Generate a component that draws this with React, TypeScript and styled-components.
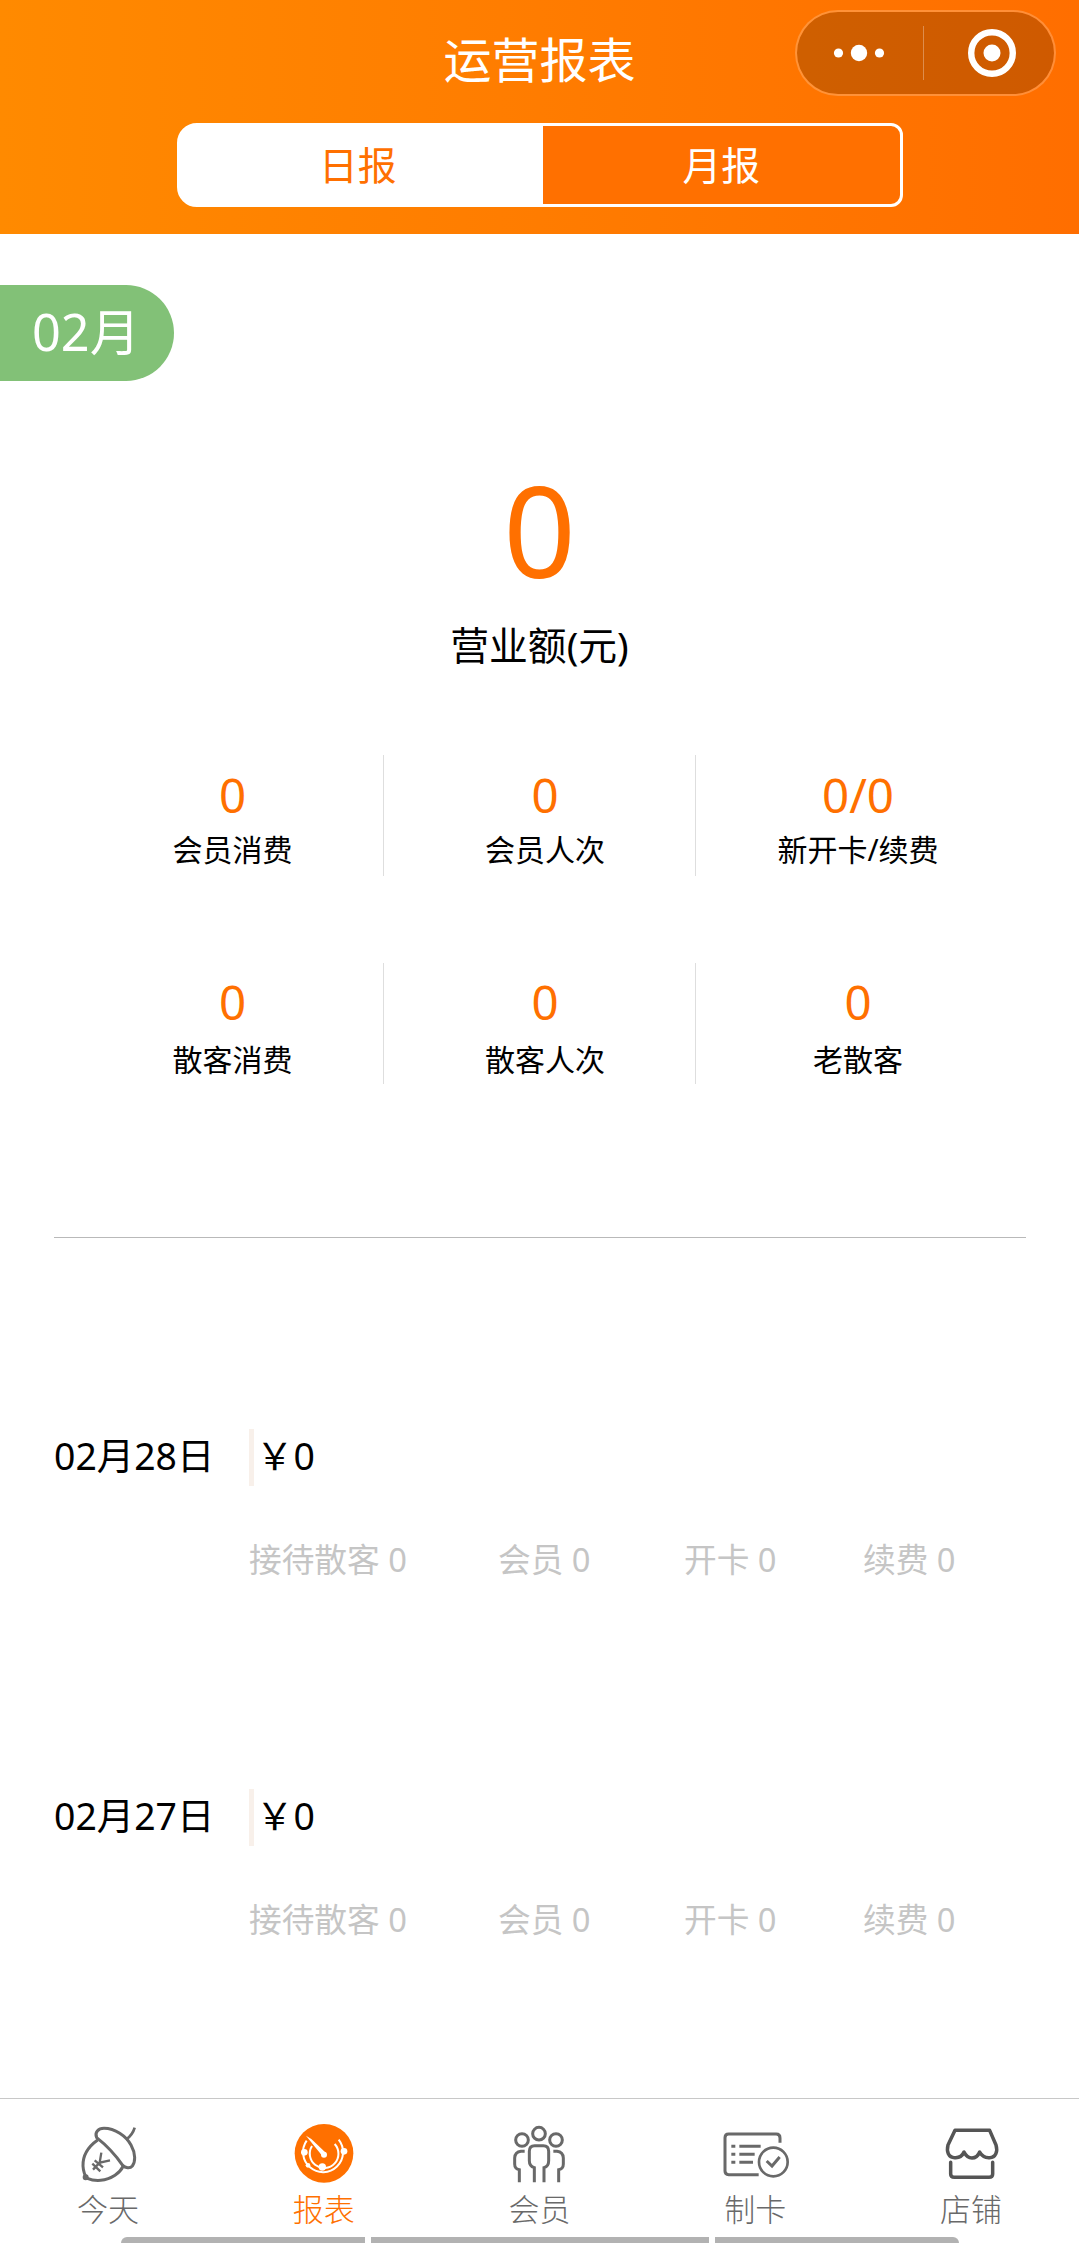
import React from "react";
import styled, { createGlobalStyle } from "styled-components";

const ORANGE = "#ff7000";
const GREY = "#696969";

const GlobalStyle = createGlobalStyle`
  * { box-sizing: border-box; }
  body {
    margin: 0;
    background: #fff;
    color: #000;
    font-family: "Noto Sans", "Noto Sans CJK SC", sans-serif;
  }
`;

const Page = styled.div`
  width: 1079px;
  height: 2243px;
  display: flex;
  flex-direction: column;
  overflow: hidden;
`;

const Header = styled.header`
  position: relative;
  height: 234px;
  flex: none;
  display: flex;
  flex-direction: column;
  align-items: center;
  background: linear-gradient(90deg, #ff8a00 0%, #ff6e00 100%);
`;

const Title = styled.h1`
  margin: 24px 0 0;
  height: 72px;
  line-height: 72px;
  font-size: 48px;
  font-weight: 400;
  color: #fff;
`;

const Capsule = styled.div`
  position: absolute;
  top: 10px;
  left: 795px;
  width: 261px;
  height: 86px;
  border: 2px solid rgba(255, 255, 255, 0.22);
  border-radius: 43px;
  background: rgba(0, 0, 0, 0.19);
  background-clip: padding-box;
  display: flex;
  align-items: center;
`;

const CapsuleHalf = styled.div<{ $pad: string }>`
  flex: 1;
  padding: ${(p) => p.$pad};
  display: flex;
  align-items: center;
  justify-content: center;
`;

const CapsuleRule = styled.div`
  width: 1px;
  height: 54px;
  background: rgba(255, 255, 255, 0.3);
`;

const Segment = styled.div`
  margin-top: 27px;
  width: 726px;
  height: 84px;
  display: flex;
`;

const SegmentItem = styled.button<{ $active?: boolean }>`
  flex: 1;
  padding: 0;
  border: 3px solid #fff;
  border-radius: ${(p) => (p.$active ? "20px 0 0 20px" : "0 12px 12px 0")};
  border-left-width: ${(p) => (p.$active ? "3px" : "4px")};
  background: ${(p) => (p.$active ? "#fff" : ORANGE)};
  color: ${(p) => (p.$active ? ORANGE : "#fff")};
  font-family: inherit;
  font-size: 38.8px;
  line-height: 56px;
`;

const Month = styled.div`
  margin-top: 51px;
  width: 174px;
  height: 96px;
  flex: none;
  padding-left: 32px;
  border-radius: 0 48px 48px 0;
  background: #82c177;
  color: #fff;
  font-size: 50.4px;
  line-height: 94px;
`;

const Summary = styled.section`
  height: 374px;
  flex: none;
  display: flex;
  flex-direction: column;
  align-items: center;
`;

const SummaryValue = styled.div`
  margin-top: 53px;
  height: 190px;
  line-height: 190px;
  font-size: 127px;
  color: ${ORANGE};
`;

const SummaryLabel = styled.div`
  margin-top: -7px;
  height: 56px;
  line-height: 56px;
  font-size: 38.8px;
`;

const Stats = styled.section`
  width: 939px;
  margin-left: 71px;
  flex: none;
  display: grid;
  grid-template-columns: 313px 312px 314px;
  row-gap: 87px;
`;

const Stat = styled.div<{ $top: number; $gap: number }>`
  height: 121px;
  display: flex;
  flex-direction: column;
  align-items: center;
  gap: ${(p) => p.$gap}px;
  padding: ${(p) => p.$top}px 0 0 11px;
  border-right: 1px solid #dedede;
  &:nth-child(3n) { border-right-color: transparent; }
`;

const StatValue = styled.div`
  height: 62px;
  line-height: 62px;
  font-size: 47.5px;
  color: ${ORANGE};
`;

const StatLabel = styled.div`
  height: 44px;
  line-height: 44px;
  font-size: 30px;
`;

const Rule = styled.hr`
  width: 972px;
  height: 1px;
  flex: none;
  margin: 153px 0 0 54px;
  border: 0;
  background: #b9b9b9;
`;

const Days = styled.section`
  flex: 1;
  min-height: 0;
  padding: 191px 0 0 54px;
  display: flex;
  flex-direction: column;
  gap: 205px;
`;

const Day = styled.article`
  height: 155px;
  flex: none;
`;

const DayHead = styled.div`
  height: 57px;
  display: flex;
  align-items: center;
  font-size: 37.4px;
`;

const DayDate = styled.div`
  width: 195px;
  line-height: 54px;
  padding-bottom: 4px;
`;

const DayAmount = styled.div`
  height: 57px;
  border-left: 5px solid #f8f0ea;
  padding-left: 2px;
  line-height: 53px;
`;

const DayDetail = styled.div`
  margin: 50px 0 0 195px;
  display: grid;
  grid-template-columns: 249px 186px 179px 150px;
  line-height: 48px;
  font-size: 32.7px;
  color: #c5c5c5;
`;

const TabBar = styled.nav`
  height: 139px;
  flex: none;
  border-top: 1px solid #c8c8c8;
  background: #fff;
  display: grid;
  grid-template-columns: repeat(5, 1fr);
`;

const Tab = styled.div<{ $active?: boolean }>`
  display: flex;
  flex-direction: column;
  align-items: center;
  color: ${(p) => (p.$active ? ORANGE : GREY)};
`;

const TabIcon = styled.svg`
  margin-top: 21px;
  width: 68px;
  height: 64px;
  flex: none;
  fill: none;
  stroke: currentColor;
  stroke-width: 9;
`;

const TabLabel = styled.div`
  height: 48px;
  line-height: 48px;
  font-family: "Noto Sans CJK SC", sans-serif;
  font-size: 31px;
  font-weight: 300;
`;

const HomeStrip = styled.div`
  height: 6px;
  flex: none;
  padding: 0 120px 0 121px;
  display: grid;
  grid-template-columns: 244px 338px 244px;
  column-gap: 6px;
`;

const HomePart = styled.div`
  background: #b2b2b2;
  &:first-child { border-top-left-radius: 6px; }
  &:last-child { border-top-right-radius: 6px; }
`;

const AcornIcon = () => (
  <TabIcon viewBox="222 90 204 192">
    <path d="M290 143C283 127 295 115 312 115C345 115 378 138 393 165C408 192 406 216 397 228C390 236 376 234 368 226C350 200 322 168 290 143Z" />
    <path d="M378 149C392 139 400 128 404 113" strokeWidth="8" />
    <path d="M293 150C262 172 248 200 249 228C250 246 254 256 262 265C285 275 318 274 345 256C358 247 365 238 370 228" />
    <circle cx="257" cy="262" r="7" fill="currentColor" strokeWidth="4" />
    <path d="M304 188L299 218L330 211M299 218L279 239M277 221L301 244M284 211L309 232" strokeWidth="7" />
  </TabIcon>
);

const ReportIcon = () => (
  <TabIcon viewBox="869 90 204 192">
    <circle cx="971" cy="190" r="88" fill="currentColor" stroke="none" />
    <g stroke="#fff" strokeWidth="6">
      <path d="M919 152A60 60 0 1 0 1015 149" />
      <path d="M935 168A43 43 0 1 0 1003 162" />
    </g>
    <g fill="#fff" stroke="none">
      <path d="M917 137L933 147L977 189L966 198Z" />
      <circle cx="971" cy="194" r="9" />
      <circle cx="912" cy="187" r="10" />
      <circle cx="1031" cy="184" r="10" />
      <circle cx="966" cy="231" r="11" />
      <circle cx="923" cy="226" r="7" />
    </g>
  </TabIcon>
);

const MembersIcon = () => (
  <TabIcon viewBox="318 90 204 192">
    <circle cx="369" cy="150" r="19" />
    <circle cx="420" cy="131" r="19" />
    <circle cx="471" cy="150" r="19" />
    <path d="M406 277V233C396 230 391 224 391 212V184Q391 167 407 167H433Q449 167 449 184V212C449 224 445 230 435 233V277" />
    <path d="M377 184H366Q348 186 347 204V222C347 234 352 237 361 239V277" />
    <path d="M463 184H474Q492 186 493 204V222C493 234 488 237 479 239V277" />
  </TabIcon>
);

const CardIcon = () => (
  <TabIcon viewBox="127 90 204 192">
    <path d="M240 254H150Q139 254 139 243V143Q139 132 150 132H293Q304 132 304 144V158" />
    <path d="M158 169H170M158 193H170M158 217H170M182 169H246M182 193H228M182 217H223" />
    <circle cx="284" cy="216" r="43" strokeWidth="8" />
    <path d="M264 213L280 228L303 201" />
  </TabIcon>
);

const ShopIcon = () => (
  <TabIcon viewBox="774 90 204 192" color="#555">
    <path
      strokeWidth="10.5"
      strokeLinejoin="round"
      d="M828 121H932L951 165C957 185 950 203 932 203C918 204 908 197 902 186C897 198 890 204 879 204C868 204 861 198 855 186C850 198 840 204 827 203C808 203 802 185 807 165Z"
    />
    <path strokeWidth="10.5" strokeLinecap="round" d="M815 217V252Q815 262 826 262H930Q941 262 941 252V217" />
  </TabIcon>
);

const stats = [
  { value: "0", label: "会员消费" },
  { value: "0", label: "会员人次" },
  { value: "0/0", label: "新开卡/续费" },
  { value: "0", label: "散客消费" },
  { value: "0", label: "散客人次" },
  { value: "0", label: "老散客" },
];

const days = ["02月28日", "02月27日"];
const details = ["接待散客 0", "会员 0", "开卡 0", "续费 0"];

const tabs = [
  { label: "今天", Icon: AcornIcon },
  { label: "报表", Icon: ReportIcon, active: true },
  { label: "会员", Icon: MembersIcon },
  { label: "制卡", Icon: CardIcon },
  { label: "店铺", Icon: ShopIcon },
];

export default function App() {
  return (
    <Page>
      <GlobalStyle />
      <Header>
        <Title>运营报表</Title>
        <Segment>
          <SegmentItem $active>日报</SegmentItem>
          <SegmentItem>月报</SegmentItem>
        </Segment>
        <Capsule>
          <CapsuleHalf $pad="0 2px 0 0">
            <svg width="52" height="18" fill="#fff">
              <circle cx="5.5" cy="9" r="4.6" />
              <circle cx="26" cy="9" r="8.2" />
              <circle cx="46.5" cy="9" r="4.6" />
            </svg>
          </CapsuleHalf>
          <CapsuleRule />
          <CapsuleHalf $pad="0 0 0 6px">
            <svg width="50" height="50" fill="none">
              <circle cx="25" cy="25" r="20.8" stroke="#fff" strokeWidth="6.4" />
              <circle cx="25" cy="25" r="8.5" fill="#fff" />
            </svg>
          </CapsuleHalf>
        </Capsule>
      </Header>
      <Month>02月</Month>
      <Summary>
        <SummaryValue>0</SummaryValue>
        <SummaryLabel>营业额(元)</SummaryLabel>
      </Summary>
      <Stats>
        {stats.map((s, i) => (
          <Stat key={s.label} $top={i < 3 ? 9 : 8} $gap={i < 3 ? 2 : 5}>
            <StatValue>{s.value}</StatValue>
            <StatLabel>{s.label}</StatLabel>
          </Stat>
        ))}
      </Stats>
      <Rule />
      <Days>
        {days.map((d) => (
          <Day key={d}>
            <DayHead>
              <DayDate>{d}</DayDate>
              <DayAmount>￥0</DayAmount>
            </DayHead>
            <DayDetail>
              {details.map((t) => (
                <span key={t}>{t}</span>
              ))}
            </DayDetail>
          </Day>
        ))}
      </Days>
      <TabBar>
        {tabs.map(({ label, Icon, active }) => (
          <Tab key={label} $active={active}>
            <Icon />
            <TabLabel>{label}</TabLabel>
          </Tab>
        ))}
      </TabBar>
      <HomeStrip>
        <HomePart />
        <HomePart />
        <HomePart />
      </HomeStrip>
    </Page>
  );
}
